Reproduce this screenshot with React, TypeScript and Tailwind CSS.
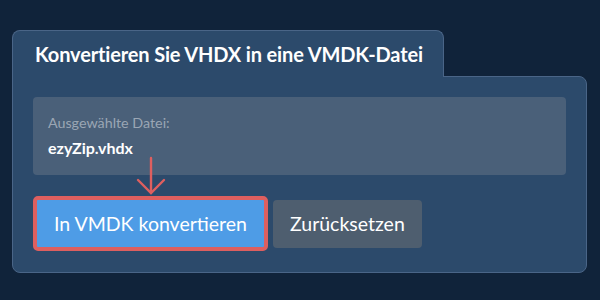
export default function App() {
  return (
    <div
      className="w-[600px] h-[300px] bg-[#10233a] pt-[30px] pl-[12px] overflow-hidden"
      style={{ fontFamily: "Lato, 'Open Sans', sans-serif" }}
    >
      <div className="w-[575px]">
        {/* tab */}
        <div className="relative z-10 w-[432px] h-[47px] -mb-px bg-[#2c4a6b] border border-b-0 border-[#4a6587] rounded-t-[8px] pl-[22px] flex items-center">
          <h1 className="text-[20px] font-bold text-white tracking-[-0.15px]">
            Konvertieren Sie VHDX in eine VMDK-Datei
          </h1>
        </div>

        {/* card */}
        <div className="relative h-[197px] bg-[#2c4a6b] border border-[#4a6587] rounded-b-[8px] rounded-tr-[8px] p-[20px]">
          <div className="h-[78px] bg-[#4a6079] rounded-[4px] px-[15px] pt-[16px]">
            <div className="text-[14.3px] leading-[20px] text-[#9aa6b4]">Ausgewählte Datei:</div>
            <div className="mt-[4px] text-[16px] leading-[22px] font-bold text-white">ezyZip.vhdx</div>
          </div>

          <div className="mt-[21px] flex items-center">
            <button className="h-[55px] px-[17px] bg-[#4e9ce6] border-4 border-[#de5f5f] rounded-[5px] text-white text-[19.5px] leading-none">
              In VMDK konvertieren
            </button>
            <button className="ml-[5px] h-[48px] px-[17px] bg-[#4e5e6f] rounded-[4px] text-white text-[19.5px] leading-none">
              Zurücksetzen
            </button>
          </div>

          {/* annotation arrow */}
          <svg
            className="absolute left-[122px] top-[79px]"
            width="32"
            height="40"
            viewBox="0 0 32 40"
            fill="none"
            stroke="#de5f5f"
            strokeWidth="2.4"
            strokeLinecap="round"
          >
            <path d="M16 2 V37" />
            <path d="M3 24 L16 37 L29 24" />
          </svg>
        </div>
      </div>
    </div>
  )
}
